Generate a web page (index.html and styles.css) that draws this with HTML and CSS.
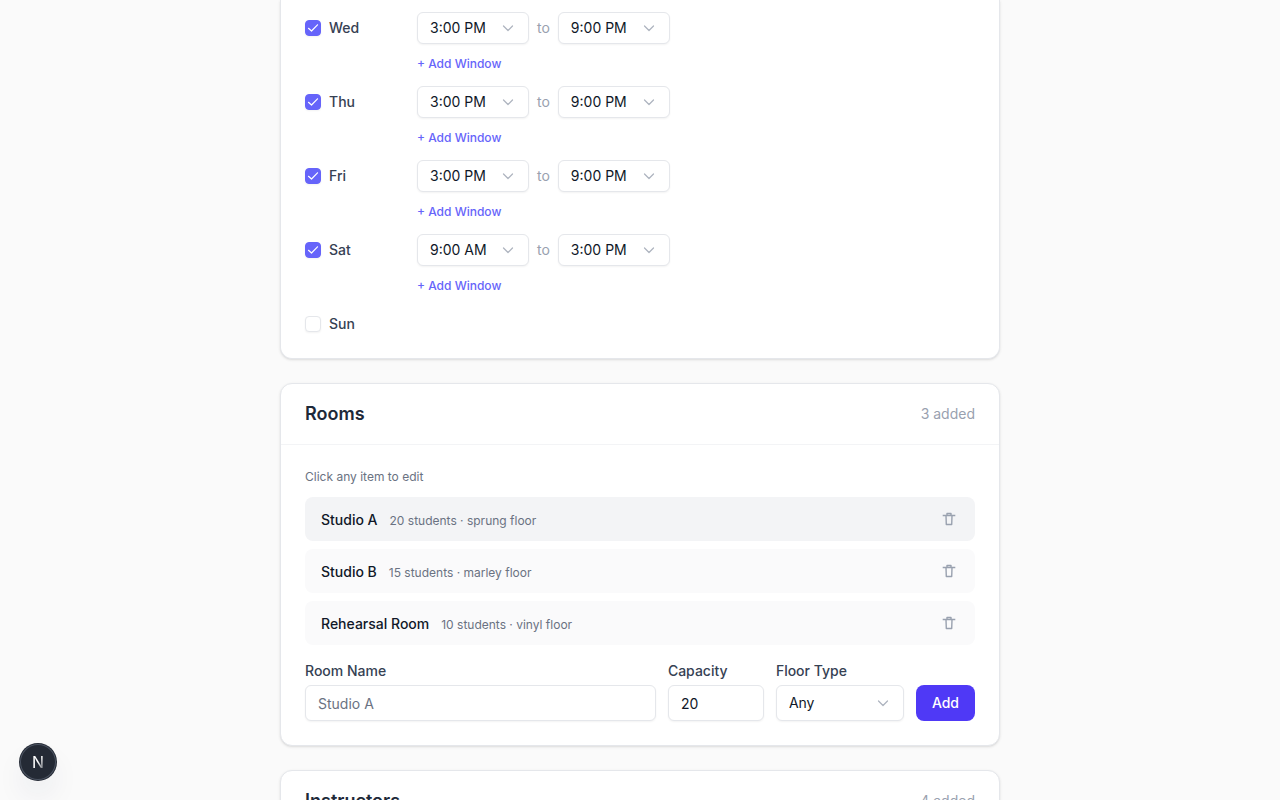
FILE: index.html
```html
<!DOCTYPE html>
<html lang="en">
<head>
  <meta charset="UTF-8">
  <meta name="viewport" content="width=device-width, initial-scale=1.0">
  <title>Studio Setup</title>
  <link rel="stylesheet" href="styles.css">
</head>
<body>
  <!-- shared icons -->
  <svg class="sprite" aria-hidden="true">
    <symbol id="chevron" viewBox="0 0 16 16">
      <path d="M3.500 6l4.500 4.500L12.500 6" fill="none" stroke="currentColor" stroke-width="1.2" stroke-linecap="round" stroke-linejoin="round"/>
    </symbol>
    <symbol id="check" viewBox="0 0 16 16">
      <path d="M3.500 8.300l3 2.700 6-6.200" fill="none" stroke="currentColor" stroke-width="1.2" stroke-linecap="round" stroke-linejoin="round"/>
    </symbol>
    <symbol id="trash" viewBox="0 0 14 14">
      <path d="M.7 3.500h12.600M5 3.200V1.500h4v1.700M4 3.700l.3 8.800h5.400l.3-8.800" fill="none" stroke="currentColor" stroke-width="1.4" stroke-linejoin="round"/>
    </symbol>
  </svg>

  <main class="page">
    <section class="card card-hours">
      <div class="day">
        <label class="day-label"><span class="check"><input type="checkbox" checked><svg><use href="#check"/></svg></span>Wed</label>
        <div class="windows">
          <div class="window">
            <div class="select"><select aria-label="Wed start"><option>3:00 PM</option></select><svg><use href="#chevron"/></svg></div>
            <span class="to">to</span>
            <div class="select"><select aria-label="Wed end"><option>9:00 PM</option></select><svg><use href="#chevron"/></svg></div>
          </div>
          <button type="button" class="add-window">+ Add Window</button>
        </div>
      </div>
      <div class="day">
        <label class="day-label"><span class="check"><input type="checkbox" checked><svg><use href="#check"/></svg></span>Thu</label>
        <div class="windows">
          <div class="window">
            <div class="select"><select aria-label="Thu start"><option>3:00 PM</option></select><svg><use href="#chevron"/></svg></div>
            <span class="to">to</span>
            <div class="select"><select aria-label="Thu end"><option>9:00 PM</option></select><svg><use href="#chevron"/></svg></div>
          </div>
          <button type="button" class="add-window">+ Add Window</button>
        </div>
      </div>
      <div class="day">
        <label class="day-label"><span class="check"><input type="checkbox" checked><svg><use href="#check"/></svg></span>Fri</label>
        <div class="windows">
          <div class="window">
            <div class="select"><select aria-label="Fri start"><option>3:00 PM</option></select><svg><use href="#chevron"/></svg></div>
            <span class="to">to</span>
            <div class="select"><select aria-label="Fri end"><option>9:00 PM</option></select><svg><use href="#chevron"/></svg></div>
          </div>
          <button type="button" class="add-window">+ Add Window</button>
        </div>
      </div>
      <div class="day">
        <label class="day-label"><span class="check"><input type="checkbox" checked><svg><use href="#check"/></svg></span>Sat</label>
        <div class="windows">
          <div class="window">
            <div class="select"><select aria-label="Sat start"><option>9:00 AM</option></select><svg><use href="#chevron"/></svg></div>
            <span class="to">to</span>
            <div class="select"><select aria-label="Sat end"><option>3:00 PM</option></select><svg><use href="#chevron"/></svg></div>
          </div>
          <button type="button" class="add-window">+ Add Window</button>
        </div>
      </div>
      <div class="day">
        <label class="day-label"><span class="check"><input type="checkbox"><svg><use href="#check"/></svg></span>Sun</label>
      </div>
    </section>

    <section class="card">
      <header class="card-header">
        <h2>Rooms</h2>
        <span class="count">3 added</span>
      </header>
      <div class="card-body">
        <p class="hint">Click any item to edit</p>
        <ul class="rooms">
          <li class="room active">
            <div class="room-text">
              <span class="room-name">Studio A</span>
              <span class="room-info">20 students · sprung floor</span>
            </div>
            <button type="button" class="delete" aria-label="Delete Studio A"><svg><use href="#trash"/></svg></button>
          </li>
          <li class="room">
            <div class="room-text">
              <span class="room-name">Studio B</span>
              <span class="room-info">15 students · marley floor</span>
            </div>
            <button type="button" class="delete" aria-label="Delete Studio B"><svg><use href="#trash"/></svg></button>
          </li>
          <li class="room">
            <div class="room-text">
              <span class="room-name">Rehearsal Room</span>
              <span class="room-info">10 students · vinyl floor</span>
            </div>
            <button type="button" class="delete" aria-label="Delete Rehearsal Room"><svg><use href="#trash"/></svg></button>
          </li>
        </ul>
        <form class="room-form">
          <div class="field field-name">
            <label for="roomName">Room Name</label>
            <input type="text" id="roomName" placeholder="Studio A">
          </div>
          <div class="field field-capacity">
            <label for="capacity">Capacity</label>
            <input type="number" id="capacity" value="20">
          </div>
          <div class="field field-floor">
            <label for="floorType">Floor Type</label>
            <div class="select"><select id="floorType"><option>Any</option></select><svg><use href="#chevron"/></svg></div>
          </div>
          <button type="button" class="add">Add</button>
        </form>
      </div>
    </section>

    <section class="card">
      <header class="card-header">
        <h2>Instructors</h2>
        <span class="count">4 added</span>
      </header>
    </section>
  </main>

  <button type="button" class="dev-badge" aria-label="Open dev tools">
    <svg viewBox="0 0 36 36">
      <defs>
        <linearGradient id="fade" x1="0" y1="0" x2="1" y2="1">
          <stop offset="0.5" stop-color="#fff"/>
          <stop offset="0.9" stop-color="#fff" stop-opacity="0.3"/>
        </linearGradient>
      </defs>
      <text x="18" y="24" text-anchor="middle" fill="url(#fade)">N</text>
    </svg>
  </button>
</body>
</html>
```
FILE: styles.css
```css
:root {
  --gray-50: #fafafb;
  --gray-100: #f3f4f6;
  --gray-200: #e5e7eb;
  --gray-400: #99a1af;
  --gray-500: #6a7282;
  --gray-700: #364153;
  --gray-800: #1e2939;
  --gray-900: #101828;
  --indigo: #6664fa;
  --indigo-dark: #4f39f6;
}
* {
  box-sizing: border-box;
}
body {
  margin: 0;
  height: 100vh;
  overflow: hidden;
  background: #fafafa;
  color: var(--gray-900);
  font-family: Inter, sans-serif;
  font-size: 14px;
  line-height: 20px;
  -webkit-font-smoothing: antialiased;
}
button, input, select {
  font: inherit;
  color: inherit;
}
button {
  padding: 0;
  border: none;
  background: none;
  cursor: pointer;
}
.sprite {
  display: none;
}
.page {
  display: flex;
  flex-direction: column;
  gap: 24px;
  max-width: 720px;
  margin: 0 auto;
}
.card {
  background: #fff;
  border: 1px solid var(--gray-200);
  border-radius: 12px;
  box-shadow: 0 1px 3px rgba(0, 0, 0, 0.1), 0 1px 2px -1px rgba(0, 0, 0, 0.1);
}

/* hours */
.card-hours {
  display: flex;
  flex-direction: column;
  gap: 12px;
  padding: 12px 24px 24px;
  border-top: none;
  border-radius: 0 0 12px 12px;
}
.day {
  display: flex;
  gap: 16px;
  align-items: flex-start;
}
.day-label {
  display: flex;
  align-items: center;
  gap: 8px;
  width: 96px;
  padding-top: 6px;
  color: var(--gray-700);
  font-weight: 500;
}
.check {
  position: relative;
  width: 16px;
  height: 16px;
}
.check input {
  display: block;
  appearance: none;
  width: 16px;
  height: 16px;
  margin: 0;
  border: 1px solid var(--gray-200);
  border-radius: 4px;
  background: #fff;
  box-shadow: 0 1px 2px rgba(0, 0, 0, 0.05);
}
.check input:checked {
  background: var(--indigo);
  border-color: var(--indigo);
}
.check svg {
  position: absolute;
  inset: 0;
  width: 16px;
  height: 16px;
  color: #fff;
  pointer-events: none;
}
.check input:not(:checked) + svg {
  display: none;
}
.windows {
  display: flex;
  flex-direction: column;
  align-items: flex-start;
  gap: 10px;
}
.window {
  display: flex;
  align-items: center;
  gap: 8px;
}
.to {
  color: var(--gray-400);
}
.add-window {
  height: 20px;
  color: var(--indigo);
  font-size: 12px;
  font-weight: 500;
}

/* form controls */
.select {
  position: relative;
  width: 112px;
  height: 32px;
}
.select select {
  appearance: none;
  width: 100%;
  height: 100%;
}
.select svg {
  position: absolute;
  top: 0;
  bottom: 0;
  right: 13px;
  width: 16px;
  height: 16px;
  margin: auto 0;
  color: var(--gray-400);
  opacity: 0.8;
  pointer-events: none;
}
.select select, .field input {
  padding: 0 12px;
  border: 1px solid var(--gray-200);
  border-radius: 6px;
  background: #fff;
  box-shadow: 0 1px 2px rgba(0, 0, 0, 0.05);
}

/* rooms */
.card-header {
  display: flex;
  align-items: center;
  justify-content: space-between;
  padding: 16px 24px;
  border-bottom: 1px solid var(--gray-100);
}
.card-header h2 {
  margin: 0;
  color: var(--gray-800);
  font-size: 18px;
  font-weight: 600;
  line-height: 28px;
}
.count {
  color: var(--gray-400);
}
.card-body {
  padding: 24px;
}
.hint {
  margin: 0 0 12px;
  color: var(--gray-500);
  font-size: 12px;
  line-height: 16px;
}
.rooms {
  display: flex;
  flex-direction: column;
  gap: 8px;
  margin: 0 0 16px;
  padding: 0;
  list-style: none;
}
.room {
  display: flex;
  align-items: center;
  justify-content: space-between;
  height: 44px;
  padding: 0 16px;
  border-radius: 8px;
  background: var(--gray-50);
}
.room.active {
  background: var(--gray-100);
}
.room-text {
  display: flex;
  align-items: baseline;
  gap: 12px;
  padding-top: 2px;
}
.room-name {
  font-weight: 500;
}
.room-info {
  color: var(--gray-500);
  font-size: 12px;
  line-height: 16px;
}
.delete {
  display: flex;
  justify-content: center;
  width: 20px;
  color: var(--gray-400);
}
.delete svg {
  width: 14px;
  height: 14px;
}
.room-form {
  display: flex;
  align-items: flex-end;
  gap: 12px;
}
.field {
  display: flex;
  flex-direction: column;
  gap: 4px;
}
.field label {
  color: var(--gray-700);
  font-weight: 500;
}
.field input {
  width: 100%;
  height: 36px;
}
.field input::placeholder {
  color: var(--gray-500);
}
.field .select {
  width: 100%;
  height: 36px;
}
.field-name {
  flex: 1;
}
.field-capacity {
  width: 96px;
}
.field-floor {
  width: 128px;
}
.add {
  height: 36px;
  padding: 0 16px;
  border-radius: 8px;
  background: var(--indigo-dark);
  color: #fff;
  font-weight: 500;
}

.dev-badge {
  position: fixed;
  left: 20px;
  bottom: 20px;
  width: 36px;
  height: 36px;
  border-radius: 50%;
  background: #242a35;
  box-shadow: 0 0 0 1px #242a35, inset 0 0 0 1px #4b5361, 0 16px 32px -8px rgba(30, 41, 80, 0.2);
}
.dev-badge svg {
  display: block;
  width: 36px;
  height: 36px;
}
.dev-badge text {
  font-size: 16px;
}
```
